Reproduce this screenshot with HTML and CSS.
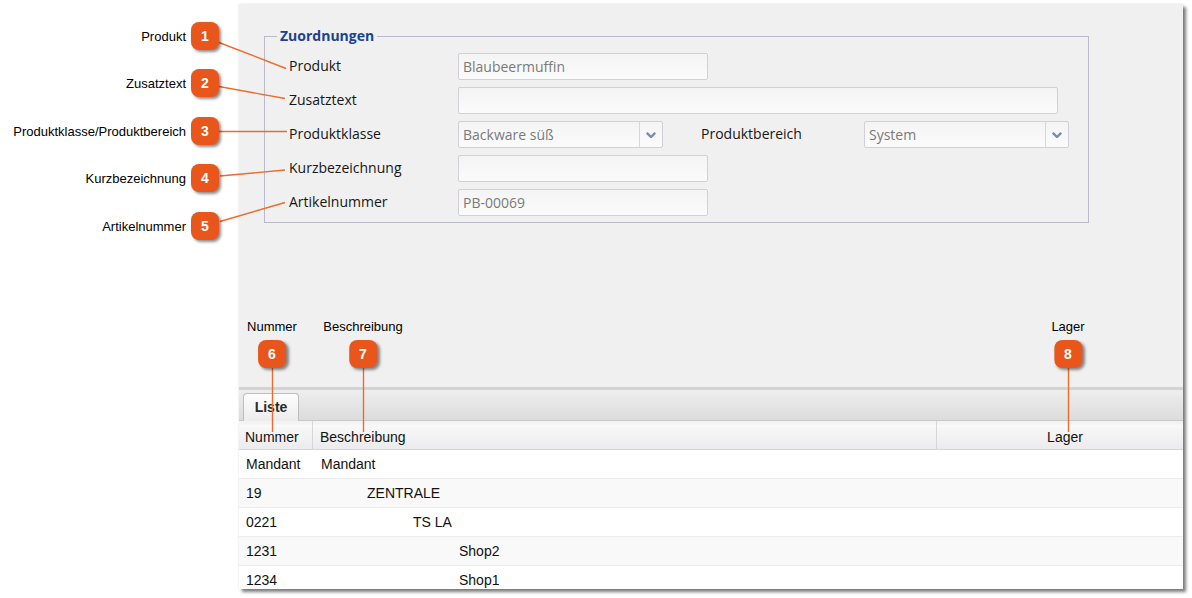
FILE: index.html
```html
<!DOCTYPE html>
<html lang="de">
<head>
<meta charset="utf-8">
<title>Zuordnungen</title>
<link rel="stylesheet" href="styles.css">
</head>
<body>
  <div class="panel">
    <div class="top">
      <fieldset class="group">
        <legend>Zuordnungen</legend>
        <div class="rows">
          <div class="row">
            <span class="lbl">Produkt</span>
            <div class="field w250">Blaubeermuffin</div>
          </div>
          <div class="row">
            <span class="lbl">Zusatztext</span>
            <div class="field w600"></div>
          </div>
          <div class="row">
            <span class="lbl">Produktklasse</span>
            <div class="field combo">
              <span class="val">Backware süß</span>
              <span class="btn"><svg width="10" height="6" viewBox="0 0 10 6"><path d="M0.8 0.8 L5 5 L9.2 0.8" fill="none" stroke="#7b8cb3" stroke-width="2.4"/></svg></span>
            </div>
            <span class="lbl lbl2">Produktbereich</span>
            <div class="field combo">
              <span class="val">System</span>
              <span class="btn"><svg width="10" height="6" viewBox="0 0 10 6"><path d="M0.8 0.8 L5 5 L9.2 0.8" fill="none" stroke="#7b8cb3" stroke-width="2.4"/></svg></span>
            </div>
          </div>
          <div class="row">
            <span class="lbl">Kurzbezeichnung</span>
            <div class="field w250"></div>
          </div>
          <div class="row">
            <span class="lbl">Artikelnummer</span>
            <div class="field w250">PB-00069</div>
          </div>
        </div>
      </fieldset>
    </div>
    <div class="tabbar">
      <div class="tab">Liste</div>
    </div>
    <div class="thead">
      <div class="c1">Nummer</div>
      <div class="c2">Beschreibung</div>
      <div class="c3">Lager</div>
    </div>
    <div class="tbody">
      <div class="tr"><div class="c1">Mandant</div><div class="c2">Mandant</div><div class="c3"></div></div>
      <div class="tr"><div class="c1">19</div><div class="c2 lv1">ZENTRALE</div><div class="c3"></div></div>
      <div class="tr"><div class="c1">0221</div><div class="c2 lv2">TS LA</div><div class="c3"></div></div>
      <div class="tr"><div class="c1">1231</div><div class="c2 lv3">Shop2</div><div class="c3"></div></div>
      <div class="tr"><div class="c1">1234</div><div class="c2 lv3">Shop1</div><div class="c3"></div></div>
    </div>
  </div>

  <svg class="callouts" width="1192" height="598" viewBox="0 0 1192 598">
    <g stroke="#ef6a2c" stroke-width="1.4" fill="none">
      <line x1="219" y1="42.5" x2="286" y2="68.5"/>
      <line x1="219" y1="86.5" x2="285" y2="98.5"/>
      <line x1="219" y1="131.5" x2="287" y2="131.5"/>
      <line x1="220" y1="176" x2="285" y2="170"/>
      <line x1="220" y1="221.5" x2="285" y2="202.5"/>
      <line x1="272.5" y1="366" x2="272.5" y2="432"/>
      <line x1="363.5" y1="366" x2="363.5" y2="432"/>
      <line x1="1068.5" y1="366" x2="1068.5" y2="432"/>
    </g>
  </svg>

  <div class="mark-left m1"><span class="note">Produkt</span><span class="badge">1</span></div>
  <div class="mark-left m2"><span class="note">Zusatztext</span><span class="badge">2</span></div>
  <div class="mark-left m3"><span class="note">Produktklasse/Produktbereich</span><span class="badge">3</span></div>
  <div class="mark-left m4"><span class="note">Kurzbezeichnung</span><span class="badge">4</span></div>
  <div class="mark-left m5"><span class="note">Artikelnummer</span><span class="badge">5</span></div>

  <div class="mark-top m6"><span class="note">Nummer</span><span class="badge">6</span></div>
  <div class="mark-top m7"><span class="note">Beschreibung</span><span class="badge">7</span></div>
  <div class="mark-top m8"><span class="note">Lager</span><span class="badge">8</span></div>
</body>
</html>
```

FILE: styles.css
```css
html, body {
  margin: 0;
}
body {
  width: 1192px;
  height: 598px;
  padding: 4px 0 0 239px;
  box-sizing: border-box;
  position: relative;
  overflow: hidden;
  background: #ffffff;
  font-family: "Liberation Sans", Arial, sans-serif;
}

.panel {
  width: 944px;
  height: 585px;
  display: flex;
  flex-direction: column;
  background: #f0f0f0;
  box-shadow: 3px 3px 3px rgba(0, 0, 0, 0.5), 0 0 2px rgba(0, 0, 0, 0.12);
  overflow: hidden;
}

.top {
  height: 383px;
  flex: none;
  box-sizing: border-box;
  padding: 24px 0 0 25px;
}

.group {
  margin: 0;
  width: 825px;
  box-sizing: border-box;
  border: 1px solid #b9bacb;
  padding: 9px 0 6px 0;
}
.group legend {
  margin-left: 12px;
  padding: 0 3px;
  font: bold 14px/16px "Open Sans", sans-serif;
  color: #1a4391;
}

.rows {
  padding-left: 24px;
  display: flex;
  flex-direction: column;
  gap: 7px;
}
.row {
  display: flex;
  align-items: center;
  height: 27px;
}
.lbl {
  width: 169px;
  flex: none;
  font: 14px/20px "Open Sans", sans-serif;
  color: #161616;
  margin-top: -2px;
}
.lbl2 {
  margin-left: 38px;
  width: 163px;
}

.field {
  height: 27px;
  box-sizing: border-box;
  border: 1px solid #cfd1da;
  border-radius: 2px;
  background: linear-gradient(#f4f4f4, #fbfbfb);
  padding-left: 4px;
  font: 14px/25px "Open Sans", sans-serif;
  color: #7a7a7a;
  flex: none;
}
.w250 { width: 250px; }
.w600 { width: 600px; }
.combo {
  width: 205px;
  display: flex;
  padding-left: 0;
}
.combo .val {
  flex: 1;
  padding-left: 4px;
}
.combo .btn {
  width: 22px;
  border-left: 1px solid #d4d6de;
  display: flex;
  align-items: center;
  justify-content: center;
}

.tabbar {
  height: 34px;
  flex: none;
  box-sizing: border-box;
  border-top: 3px solid #d3d3d3;
  border-bottom: 1px solid #c8c8c8;
  background: linear-gradient(#eeeeee, #dcdcdc);
  padding-left: 4px;
  display: flex;
  align-items: flex-end;
}
.tab {
  width: 56px;
  height: 28px;
  box-sizing: border-box;
  margin-bottom: -1px;
  border: 1px solid #bdbdbd;
  border-bottom: none;
  border-radius: 4px 4px 0 0;
  background: linear-gradient(#fdfdfd, #ececec);
  font: bold 14px/27px "Liberation Sans", Arial, sans-serif;
  color: #2a2a2a;
  text-align: center;
}

.thead, .tr {
  display: flex;
  align-items: center;
  height: 29px;
  flex: none;
  box-sizing: border-box;
  font: 14px/18px "Liberation Sans", Arial, sans-serif;
  color: #111111;
}
.thead {
  border-bottom: 1px solid #d5d5d5;
  background: linear-gradient(#f3f3f3 0, #f3f3f3 3px, #f9f9f9 4px, #ebebee);
}
.thead > div {
  height: 100%;
  display: flex;
  align-items: center;
  box-sizing: border-box;
  padding-top: 3px;
}
.thead .c1 { width: 74px; padding-left: 6px; border-right: 1px solid #d6d6d6; }
.thead .c2 { width: 624px; padding-left: 7px; border-right: 1px solid #d6d6d6; }
.thead .c3 { flex: 1; justify-content: center; padding-left: 10px; }

.tbody {
  background: #ffffff;
  flex: 1;
}
.tr {
  border-bottom: 1px solid #ececec;
  background: #ffffff;
}
.tr:nth-child(even) {
  background: #f9f9f9;
}
.tr .c1 { width: 74px; padding-left: 7px; box-sizing: border-box; }
.tr .c2 { width: 624px; padding-left: 8px; box-sizing: border-box; }
.tr .c3 { flex: 1; }
.tr .lv1 { padding-left: 54px; }
.tr .lv2 { padding-left: 100px; }
.tr .lv3 { padding-left: 146px; }

/* annotation overlay */
.callouts {
  position: absolute;
  left: 0;
  top: 0;
  pointer-events: none;
}
.note {
  font: 13px/15px "Liberation Sans", Arial, sans-serif;
  color: #000000;
  white-space: nowrap;
}
.badge {
  width: 28px;
  height: 28px;
  border-radius: 8px;
  background: #e8561b;
  color: #ffffff;
  font: bold 14px/28px "Liberation Sans", Arial, sans-serif;
  text-align: center;
  box-shadow: 2px 2px 3px rgba(0, 0, 0, 0.45);
  flex: none;
}
.mark-left {
  position: absolute;
  right: 973px;
  display: flex;
  align-items: center;
  gap: 5px;
}
.m1 { top: 22px; }
.m2 { top: 69px; }
.m3 { top: 117px; }
.m4 { top: 164px; }
.m5 { top: 212px; }

.mark-top {
  position: absolute;
  top: 319px;
  display: flex;
  flex-direction: column;
  align-items: center;
  gap: 6px;
  transform: translateX(-50%);
}
.m6 { left: 272px; }
.m7 { left: 363px; }
.m8 { left: 1068px; }
```
